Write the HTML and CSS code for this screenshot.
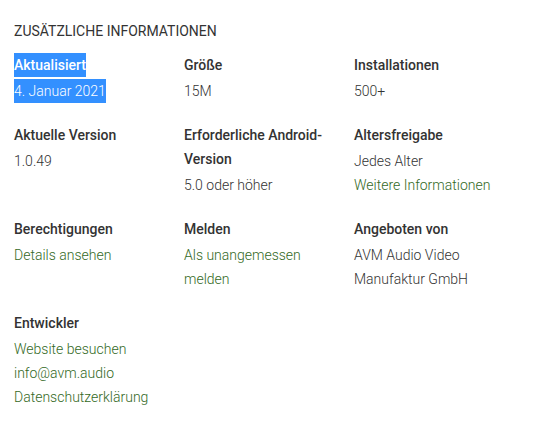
FILE: index.html
```html
<!DOCTYPE html>
<html lang="de">
<head>
  <meta charset="UTF-8">
  <title>Zusätzliche Informationen</title>
  <link rel="stylesheet" href="styles.css">
</head>
<body>
  <h2 class="title">Zusätzliche Informationen</h2>
  <div class="info-grid">
    <div class="item">
      <div class="label"><span class="sel">Aktualisiert</span></div>
      <div class="value"><span class="sel">4. Januar 2021</span></div>
    </div>
    <div class="item">
      <div class="label">Größe</div>
      <div class="value">15M</div>
    </div>
    <div class="item">
      <div class="label">Installationen</div>
      <div class="value">500+</div>
    </div>

    <div class="item">
      <div class="label">Aktuelle Version</div>
      <div class="value">1.0.49</div>
    </div>
    <div class="item">
      <div class="label">Erforderliche Android-Version</div>
      <div class="value">5.0 oder höher</div>
    </div>
    <div class="item">
      <div class="label">Altersfreigabe</div>
      <div class="value">
        <div>Jedes Alter</div>
        <a class="link" href="#">Weitere Informationen</a>
      </div>
    </div>

    <div class="item">
      <div class="label">Berechtigungen</div>
      <div class="value"><a class="link" href="#">Details ansehen</a></div>
    </div>
    <div class="item">
      <div class="label">Melden</div>
      <div class="value"><a class="link" href="#">Als unangemessen melden</a></div>
    </div>
    <div class="item">
      <div class="label">Angeboten von</div>
      <div class="value">AVM Audio Video Manufaktur GmbH</div>
    </div>

    <div class="item">
      <div class="label">Entwickler</div>
      <div class="value">
        <div><a class="link" href="#">Website besuchen</a></div>
        <div><a class="link" href="#">info@avm.audio</a></div>
        <div><a class="link" href="#">Datenschutzerklärung</a></div>
      </div>
    </div>
  </div>
</body>
</html>
```

FILE: styles.css
```css
body {
  margin: 0;
  padding: 21px 14px 20px;
  font-family: Roboto, "Liberation Sans", sans-serif;
  font-size: 14px;
  color: #333;
  background: #fff;
}
.title {
  margin: 0 0 12px;
  font-size: 14px;
  font-weight: 400;
  line-height: 20px;
  text-transform: uppercase;
  color: #333;
}
.info-grid {
  display: grid;
  grid-template-columns: repeat(3, 170px);
  row-gap: 20px;
}
.item {
  padding-right: 20px;
}
.label {
  font-weight: 500;
  line-height: 24px;
}
.value {
  margin-top: 2px;
  font-weight: 300;
  line-height: 24px;
}
.link {
  color: #33691e;
  text-decoration: none;
}
.sel {
  display: inline-block;
  background: #3390ff;
  color: #fff;
}
```
